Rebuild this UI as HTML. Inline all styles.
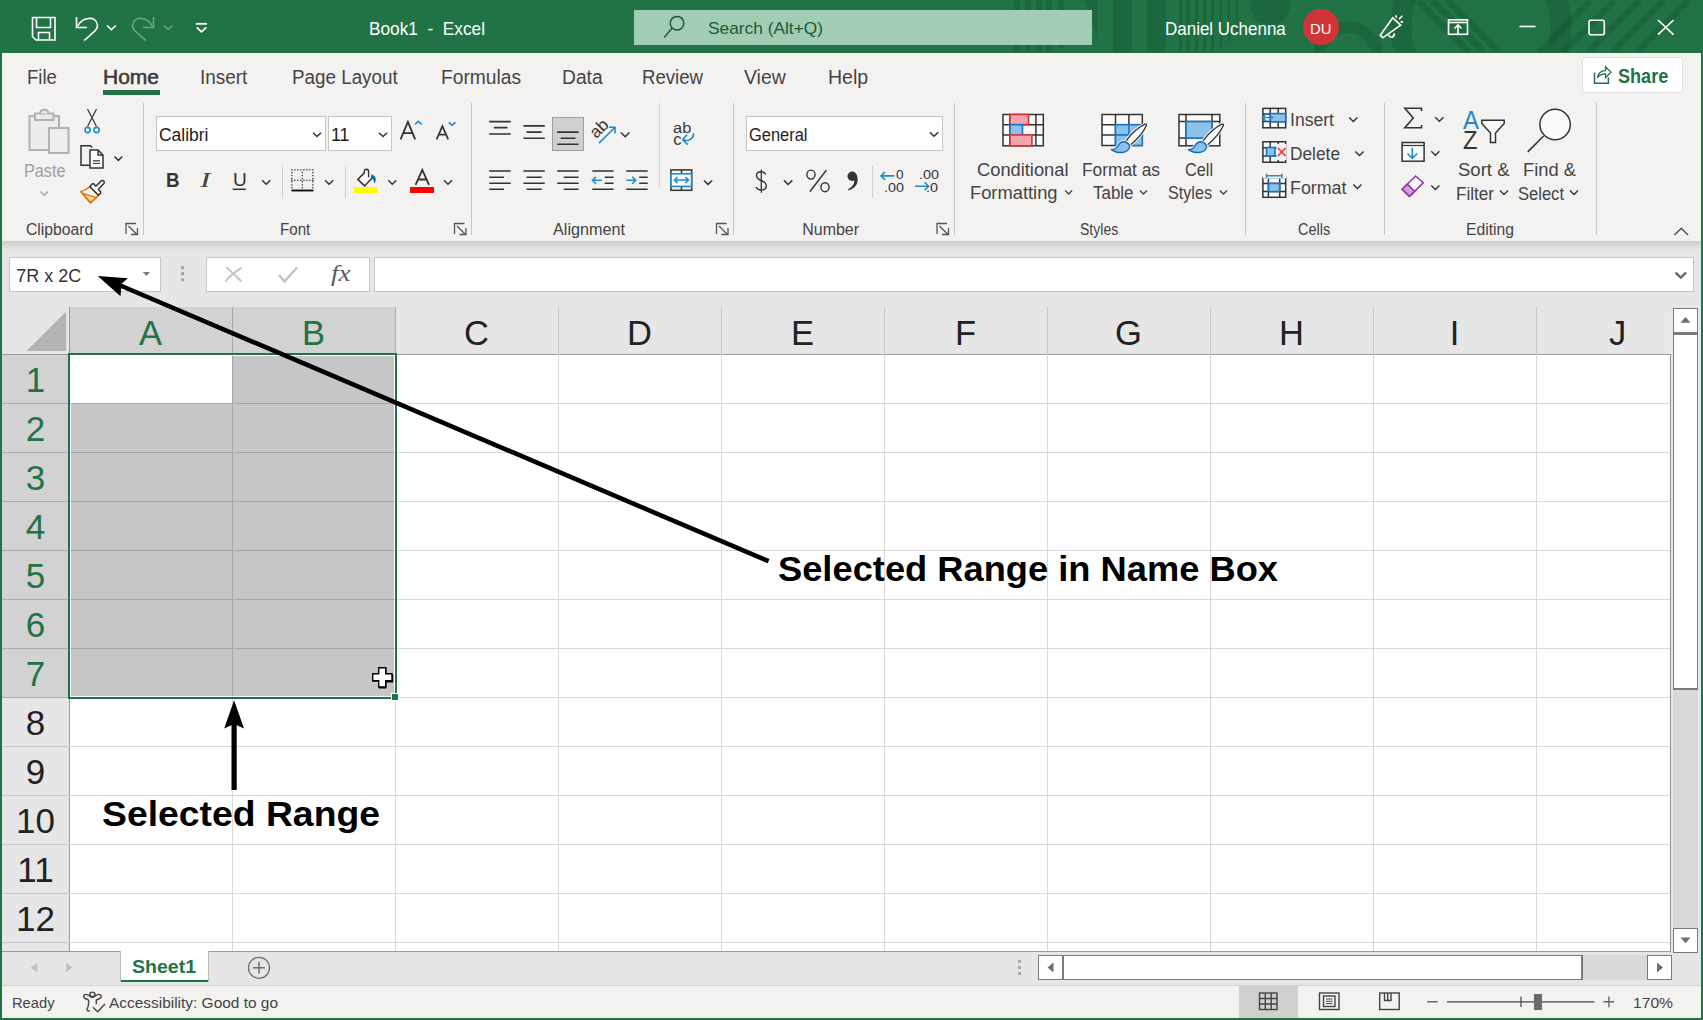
<!DOCTYPE html>
<html><head><meta charset="utf-8">
<style>
*{box-sizing:border-box;margin:0;padding:0}
html,body{width:1703px;height:1020px;overflow:hidden;background:#217346;font-family:"Liberation Sans",sans-serif;position:relative}
.a{position:absolute}
.t{position:absolute;white-space:nowrap;line-height:1;transform-origin:0 0}
svg{position:absolute;overflow:visible}
</style></head><body>
<div class="a" style="left:2px;top:53px;width:1699px;height:188px;background:#f3f2f1"></div>
<div class="a" style="left:2px;top:241px;width:1699px;height:66px;background:#e6e6e6"></div>
<div class="a" style="left:2px;top:241px;width:1699px;height:9px;background:linear-gradient(#cdcdcd,#e6e6e6)"></div>
<div class="a" style="left:2px;top:307px;width:1699px;height:645px;background:#e6e6e6"></div>
<div class="a" style="left:2px;top:952px;width:1699px;height:34px;background:#e6e6e6"></div>
<div class="a" style="left:2px;top:985px;width:1699px;height:1px;background:#d2d2d2"></div>
<div class="a" style="left:2px;top:986px;width:1699px;height:32px;background:#f3f2f1"></div>
<svg style="left:0;top:0" width="1703" height="52" viewBox="0 0 1703 52"><defs><clipPath id="tc"><rect x="0" y="0" width="1703" height="52"/></clipPath></defs>
<g clip-path="url(#tc)">
<g fill="#000" fill-opacity="0.10">
<rect x="1014" y="0" width="6" height="52"/><rect x="1025" y="0" width="6" height="52"/><rect x="1036" y="0" width="6" height="52"/><rect x="1046" y="0" width="6" height="52"/><rect x="1058" y="0" width="6" height="48"/>
<path d="M1084 0 H1097 V38 Z"/>
<rect x="1113" y="0" width="19" height="52"/>
<rect x="1147" y="0" width="19" height="52"/>
<rect x="1179" y="0" width="3" height="52"/><rect x="1186.5" y="0" width="3" height="52"/><rect x="1195" y="0" width="3" height="52"/><rect x="1203" y="0" width="3" height="52"/><rect x="1211" y="0" width="3" height="52"/><rect x="1219.5" y="0" width="3" height="49"/><rect x="1227.5" y="0" width="3" height="42"/><rect x="1235.6" y="0" width="3" height="35"/>
<circle cx="1270" cy="5" r="20"/>
</g>
<g fill="none" stroke="#000" stroke-opacity="0.10">
<circle cx="1348" cy="56" r="29" stroke-width="12"/>
<circle cx="1481" cy="26" r="80" stroke-width="21"/>
</g>
<g stroke="#000" stroke-opacity="0.10" stroke-width="7">
<path d="M1417 0 L1469 52 M1432 0 L1484 52 M1447 0 L1499 52"/>
<path d="M1591 0 L1539 52 M1615 0 L1563 52 M1640 0 L1588 52 M1664 0 L1612 52 M1689 0 L1637 52"/>
</g></g>
</svg>
<svg style="left:0;top:0" width="240" height="52" viewBox="0 0 240 52" fill="none" stroke="#fff" stroke-width="1.6">
<path d="M32.5 17.5 H55 V40 H36 L32.5 36.5 Z"/>
<path d="M36.5 17.5 V27.5 H50.5 V17.5"/>
<path d="M38.5 40 V32.5 H49.5 V40"/>
<path d="M76.5 17 V27.5 H87" />
<path d="M77.5 26.5 C82 17 96 15 97.5 25 C98 29 95 31 84 40.5"/>
<path d="M107 25.5 L111.4 29.7 L115.8 25.5"/>
<g stroke="#66a885">
<path d="M153.5 17 V27.5 H143" />
<path d="M152.5 26.5 C148 17 134 15 132.5 25 C132 29 135 31 146 40.5"/>
<path d="M164 25.5 L168.2 29.5 L172.4 25.5"/>
</g>
<path d="M195.8 23.8 H207" stroke-width="1.8"/>
<path d="M196.8 27.3 L201.5 31.8 L206.3 27.3" stroke-width="1.8"/>
</svg>
<div class="a" style="left:634px;top:10px;width:458px;height:35px;background:#a0cdb4"></div>
<svg style="left:655px;top:10px" width="40" height="35" viewBox="0 0 40 35" fill="none" stroke="#1d5a37" stroke-width="1.5">
<circle cx="22" cy="13.2" r="6.8"/><path d="M17.2 18 L9.2 27.5"/></svg>
<div class="a" style="left:1303px;top:9px;width:36px;height:36px;border-radius:50%;background:#d13438"></div>
<svg style="left:0;top:0" width="1703" height="52" viewBox="0 0 1703 52" fill="none" stroke="#fff" stroke-width="1.6">
<path d="M1380.3 35.3 L1392.8 17.8 L1400.6 25.2 L1382.8 37.8 Z" stroke-linejoin="miter"/>
<path d="M1388.6 34.8 Q1389.5 37.5 1391.8 37.2 Q1394.5 36.5 1394.3 33.2"/>
<path d="M1396.2 15.2 V17.8 M1399 19.2 L1402.4 15.7 M1400.6 21.9 H1403"/>
<rect x="1448.5" y="19.8" width="19" height="14.5"/>
<path d="M1448.5 22.5 H1467.5"/>
<path d="M1458 34 V25.5 M1454.5 28.5 L1458 25 L1461.5 28.5"/>
<path d="M1519.5 26.5 H1535.5"/>
<rect x="1589" y="20.2" width="15.3" height="14.5" rx="2"/>
<path d="M1658 20 L1673.5 34.7 M1673.5 20 L1658 34.7"/>
</svg>
<div class="a" style="left:103px;top:90px;width:57px;height:5px;background:#217346"></div>
<div class="a" style="left:1582px;top:57px;width:101px;height:36px;background:#fff;border:1px solid #e1dfdd;border-radius:3px"></div>
<svg style="left:0;top:0" width="1703" height="241" viewBox="0 0 1703 241" fill="none" stroke="#217346" stroke-width="1.5">
<path d="M1594.5 72.4 V83.3 H1608.4 V77.4" stroke-width="1.5"/>
<path d="M1597.4 77.8 Q1598.6 70.9 1605.5 70.7 V66.8 L1611 72.2 L1605.5 77.6 V73.9 Q1600.2 73.7 1597.4 77.8 Z" stroke-width="1.3" stroke-linejoin="miter"/>
</svg>
<div class="a" style="left:143px;top:103px;width:1px;height:132px;background:#c8c6c4"></div>
<div class="a" style="left:471px;top:103px;width:1px;height:132px;background:#c8c6c4"></div>
<div class="a" style="left:733px;top:103px;width:1px;height:132px;background:#c8c6c4"></div>
<div class="a" style="left:954px;top:103px;width:1px;height:132px;background:#c8c6c4"></div>
<div class="a" style="left:1245px;top:103px;width:1px;height:132px;background:#c8c6c4"></div>
<div class="a" style="left:1384px;top:103px;width:1px;height:132px;background:#c8c6c4"></div>
<div class="a" style="left:1596px;top:103px;width:1px;height:132px;background:#c8c6c4"></div>
<div class="a" style="left:282px;top:166px;width:1px;height:32px;background:#d2d0ce"></div>
<div class="a" style="left:345px;top:166px;width:1px;height:32px;background:#d2d0ce"></div>
<div class="a" style="left:659px;top:103px;width:1px;height:84px;background:#d2d0ce"></div>
<div class="a" style="left:872px;top:166px;width:1px;height:32px;background:#d2d0ce"></div>
<svg style="left:0;top:0" width="1703" height="241" viewBox="0 0 1703 241" fill="none" stroke="#555" stroke-width="1.3">
<path d="M126 234 V223.5 H136 M128.5 226 L137 234.5 M131 234.5 H137.5 V228"/>
<path d="M454.5 234 V223.5 H464.5 M457 226 L465.5 234.5 M459.5 234.5 H466 V228"/>
<path d="M716.5 234 V223.5 H726.5 M719 226 L727.5 234.5 M721.5 234.5 H728 V228"/>
<path d="M937 234 V223.5 H947 M939.5 226 L948 234.5 M942 234.5 H948.5 V228"/>
<path d="M1674.5 235 L1681.3 228.3 L1688 235" stroke-width="1.6"/>
</svg>
<svg style="left:0;top:0" width="1703" height="241" viewBox="0 0 1703 241" fill="none" stroke-width="1.5">
<g stroke="#b1b1b1" stroke-width="2">
<rect x="29.5" y="116" width="29.5" height="34" fill="#ececec"/>
<path d="M35 113.5 H53.5 V120 H35 Z" fill="#ececec"/>
<path d="M40 113.5 A4.3 4.3 0 0 1 48.5 113.5" fill="#ececec"/>
<rect x="49" y="128" width="19.5" height="25" fill="#eeeeee"/>
</g>
<path d="M40.5 191.5 L44.3 195.3 L48 191.5" stroke="#a6a6a6"/>
<g stroke="#333" stroke-width="1.2">
<path d="M87.5 109 L96.5 126.5 M96.5 109 L87.5 126.5"/>
</g>
<g stroke="#1e8bcd" stroke-width="1.6">
<circle cx="87.6" cy="130" r="2.6" fill="#fff"/><circle cx="96.6" cy="130" r="2.6" fill="#fff"/>
</g>
<g stroke="#333" stroke-width="1.5" stroke-linejoin="miter">
<path d="M89.5 165.2 H81 V145.8 H90.5 L92 147.5"/>
<path d="M90 150 H98 L103 155 V168 H90 Z" fill="#fafafa"/>
<path d="M98 150 V155 H103"/>
<path d="M93 160.8 H100 M93 163.5 H100" stroke-width="1.2"/>
<path d="M114.5 156.5 L118.4 160.4 L122.3 156.5"/>
</g>
<g stroke-linejoin="round">
<path d="M89.8 186.7 Q86.5 190 80.6 191.6 L90.4 203 L98.6 195.5 Z" fill="#fafafa" stroke="#e07010" stroke-width="1.5"/>
<path d="M82.5 193.3 L96.8 197.6 L90.4 202.3 Z" fill="#f7d98a" stroke="#e07010" stroke-width="1.3"/>
<path d="M89.8 186.5 L92.5 183.8 Q93.2 183.3 93.8 183.9 L95.8 186.2 L101.3 180.9 Q102.6 179.9 103.8 181.1 Q104.9 182.4 103.9 183.6 L98.4 189.3 L100.5 191.7 Q101.1 192.5 100.4 193.3 L98.4 195.3 Z" fill="#fafafa" stroke="#333" stroke-width="1.5"/>
</g>
</svg>
<div class="a" style="left:156px;top:116px;width:170px;height:35px;background:#fff;border:1px solid #c6c6c6"></div>
<div class="a" style="left:328px;top:116px;width:64px;height:35px;background:#fff;border:1px solid #c6c6c6"></div>
<svg style="left:0;top:0" width="1703" height="241" viewBox="0 0 1703 241" fill="none" stroke="#333" stroke-width="1.5">
<path d="M313.1 132.8 L317 136.5 L321 132.8"/>
<path d="M378.9 132.8 L383 136.5 L387.1 132.8"/>
<path d="M262.2 180.2 L266.2 184.2 L270.3 180.2"/>
<path d="M325.1 180.2 L329.1 184.2 L333.2 180.2"/>
<path d="M388.3 180.2 L392.3 184.2 L396.3 180.2"/>
<path d="M444 180.2 L448 184.2 L452 180.2"/>
<g stroke="#1e8bcd" stroke-width="1.6">
<path d="M415 124.4 L418.3 121.4 L421.7 124.4"/>
<path d="M448.8 122.3 L452.1 125.2 L455.5 122.3"/>
</g>
<path d="M232.7 189.3 H245.8" stroke-width="1.5"/>
<path d="M400.6 139.4 L407.9 121.8 L415.2 139.4 M403.2 133.2 H412.6" stroke-width="1.8"/>
<path d="M436.6 139.4 L442.4 126.2 L448.2 139.4 M438.7 134.6 H446.1" stroke-width="1.7"/>
<path d="M415.6 184.9 L422.3 170 L429 184.9 M417.9 179.5 H426.7" stroke-width="1.8"/>
<g fill="#333" stroke="none"><rect x="291.2" y="169.2" width="1.3" height="1.3"/><rect x="291.2" y="179.7" width="1.3" height="1.3"/><rect x="294.2" y="169.2" width="1.3" height="1.3"/><rect x="294.2" y="179.7" width="1.3" height="1.3"/><rect x="297.2" y="169.2" width="1.3" height="1.3"/><rect x="297.2" y="179.7" width="1.3" height="1.3"/><rect x="300.2" y="169.2" width="1.3" height="1.3"/><rect x="300.2" y="179.7" width="1.3" height="1.3"/><rect x="303.2" y="169.2" width="1.3" height="1.3"/><rect x="303.2" y="179.7" width="1.3" height="1.3"/><rect x="306.2" y="169.2" width="1.3" height="1.3"/><rect x="306.2" y="179.7" width="1.3" height="1.3"/><rect x="309.2" y="169.2" width="1.3" height="1.3"/><rect x="309.2" y="179.7" width="1.3" height="1.3"/><rect x="312.2" y="169.2" width="1.3" height="1.3"/><rect x="312.2" y="179.7" width="1.3" height="1.3"/><rect x="291.2" y="171.9" width="1.3" height="1.3"/><rect x="301.7" y="171.9" width="1.3" height="1.3"/><rect x="312.2" y="171.9" width="1.3" height="1.3"/><rect x="291.2" y="174.9" width="1.3" height="1.3"/><rect x="301.7" y="174.9" width="1.3" height="1.3"/><rect x="312.2" y="174.9" width="1.3" height="1.3"/><rect x="291.2" y="177.9" width="1.3" height="1.3"/><rect x="301.7" y="177.9" width="1.3" height="1.3"/><rect x="312.2" y="177.9" width="1.3" height="1.3"/><rect x="291.2" y="181.2" width="1.3" height="1.3"/><rect x="301.7" y="181.2" width="1.3" height="1.3"/><rect x="312.2" y="181.2" width="1.3" height="1.3"/><rect x="291.2" y="184.2" width="1.3" height="1.3"/><rect x="301.7" y="184.2" width="1.3" height="1.3"/><rect x="312.2" y="184.2" width="1.3" height="1.3"/><rect x="291.2" y="187.0" width="1.3" height="1.3"/><rect x="301.7" y="187.0" width="1.3" height="1.3"/><rect x="312.2" y="187.0" width="1.3" height="1.3"/></g>
<path d="M291.5 190.5 H313.5" stroke-width="1.9" stroke="#111"/>
<path d="M364.3 172.9 L357.8 179.4 L364.6 185.9 L372.4 177.8 L371.3 176.6" stroke-width="1.5" stroke-linejoin="miter" fill="#fafafa"/>
<path d="M364.3 172.9 V171.2 Q364.5 169.3 366.6 169.3 Q368.5 169.4 368.6 171.6 V177.3" stroke-width="1.4"/>
<path d="M371 174.6 Q375.7 175.3 375.8 179.6 Q375.6 182 374.6 183.8 Q374.1 180 371.6 177.4 Z" fill="#0f6cbd" stroke="none"/>
</svg>
<div class="a" style="left:354px;top:186.5px;width:24px;height:6px;background:#ffff00"></div>
<div class="a" style="left:410px;top:186.5px;width:24px;height:6px;background:#ff0000"></div>
<div class="a" style="left:552px;top:117px;width:32px;height:34px;background:#d2d0ce;border:1px solid #9d9d9d"></div>
<svg style="left:0;top:0" width="1703" height="241" viewBox="0 0 1703 241" fill="none" stroke="#333" stroke-width="1.6">
<path d="M489.2 121.6 H510.7 M493.8 127.6 H507.5 M489.2 134 H510.7"/>
<path d="M523.4 125.9 H544.8 M526.5 132.1 H541.7 M523.4 138.2 H544.8"/>
<path d="M557.2 132.1 H578.6 M560.6 138.2 H575.5 M557.2 144.2 H578.6"/>
<path d="M489.2 171 H510.7 M489.2 177.2 H504 M489.2 183.3 H510.7 M489.2 189.3 H504"/>
<path d="M523.4 171 H544.8 M526.5 177.2 H541.7 M523.4 183.3 H544.8 M526.5 189.3 H541.7"/>
<path d="M557.2 171 H578.6 M563.8 177.2 H578.6 M557.2 183.3 H578.6 M563.8 189.3 H578.6"/>
<path d="M592.3 171 H613.6 M604.7 177.2 H613.6 M604.7 183.3 H613.6 M592.3 189.3 H613.6"/>
<path d="M626.3 171 H647.7 M639.2 177.2 H647.7 M639.2 183.3 H647.7 M626.3 189.3 H647.7"/>
<path d="M620.9 132.5 L625.2 136.8 L629.4 132.5" stroke-width="1.5"/>
<path d="M704 180.5 L708 184.4 L712.2 180.5" stroke-width="1.5"/>
<g stroke="#1e8bcd" stroke-width="1.6">
<path d="M592.5 180.2 H601.9 M596 176.7 L592.5 180.2 L596 183.7"/>
<path d="M626.3 180.2 H635.7 M632.2 176.7 L635.7 180.2 L632.2 183.7"/>
<path d="M599 143.1 L615 127.2 M609 127.2 H615 V133.2"/>
<path d="M693.6 133.2 Q693.6 138.6 688.5 140.2 Q685.6 140.9 683.2 139.7 M686.9 134.7 L682.7 139.7 L687.7 144.6"/>
</g>
<rect x="670.9" y="169.9" width="20.8" height="20.4" stroke-width="1.5"/>
<path d="M681.5 170 V174 M681.5 186.5 V190" stroke-width="1.5"/>
<rect x="671" y="173.8" width="20.6" height="12.6" stroke="#1e8bcd" stroke-width="1.6" fill="#fafafa"/>
<path d="M674.5 180.1 H688.5 M677.5 177.1 L674.5 180.1 L677.5 183.1 M685.5 177.1 L688.5 180.1 L685.5 183.1" stroke="#1e8bcd" stroke-width="1.5"/>
</svg>
<div class="a" style="left:746px;top:116px;width:197px;height:35px;background:#fff;border:1px solid #c6c6c6"></div>
<svg style="left:0;top:0" width="1703" height="241" viewBox="0 0 1703 241" fill="none" stroke="#333" stroke-width="1.5">
<path d="M929.9 132.2 L934 136.3 L938.3 132.2"/>
<path d="M784 180.4 L788.1 184.5 L792.3 180.4"/>
<path d="M761.3 169.4 V192.7" stroke-width="1.3"/>
<path d="M765.8 174.3 C764.5 172.2 762.8 171.7 761 171.7 C758 171.7 756.5 173.5 756.5 175.6 C756.5 182 766.3 179.5 766.3 185.8 C766.3 188.3 764.5 190 761.3 190 C758.8 190 757 189 756 187" stroke-width="1.4"/>
<ellipse cx="811" cy="174.6" rx="4.1" ry="4.5" stroke-width="1.4"/>
<ellipse cx="825" cy="187.2" rx="4.1" ry="4.5" stroke-width="1.4"/>
<path d="M826.3 170.2 L809.8 191.7" stroke-width="1.4"/>
<circle cx="852.2" cy="176.3" r="4.7" fill="#333" stroke="none"/>
<path d="M856.6 174.8 C859.2 181 857.3 187.8 848.4 190.5 L848 189.2 C852.8 186.6 854.7 183.4 854.2 179.4 Z" fill="#333" stroke="none"/>
<g stroke="#1e8bcd" stroke-width="1.6">
<path d="M881 175.9 H894.4 M885 171.9 L881 175.9 L885 179.9"/>
<path d="M915 186.2 H928.6 M924.6 182.2 L928.6 186.2 L924.6 190.2"/>
</g>
</svg>
<svg style="left:0;top:0" width="1703" height="241" viewBox="0 0 1703 241" fill="none" stroke-width="1.5">
<g stroke="#333" fill="#fafafa">
<rect x="1003" y="114.5" width="40.3" height="31.3"/>
<path d="M1009.8 114.5 V145.8 M1035.9 114.5 V145.8 M1003 124.7 H1043.3 M1003 134.9 H1043.3" fill="none"/>
</g>
<rect x="1010" y="114.5" width="18.5" height="10.2" fill="#f6a4ab" stroke="#d13438" stroke-width="1.6"/>
<rect x="1010" y="124.7" width="12.5" height="10.2" fill="#8cc1ea" stroke="#1a75c4" stroke-width="1.6"/>
<rect x="1010" y="134.9" width="21.9" height="10.9" fill="#f6a4ab" stroke="#d13438" stroke-width="1.6"/>

<g stroke="#333" fill="#fafafa">
<rect x="1102" y="114.5" width="40.3" height="31"/>
<path d="M1115.5 114.5 V145.5 M1128.9 114.5 V145.5 M1102 124.7 H1142.3 M1102 134.9 H1142.3" fill="none"/>
</g>
<rect x="1115.5" y="124.7" width="26.8" height="20.8" fill="#8cc1ea" stroke="#1a75c4" stroke-width="1.6"/>
<path d="M1115.5 134.9 H1142.3 M1128.9 124.7 V145.5" stroke="#1a75c4" stroke-width="1.6"/>
<path d="M1125.3 141.8 C1131.0 134 1139.0 127 1145.0 124.2 Q1146.5 123.6 1146.5 125.2 C1144.0 131 1137.0 139.5 1129.6 145.8 Z" fill="none" stroke="#fafafa" stroke-width="3.2" stroke-linejoin="round"/>
<path d="M1125.3 141.8 C1131.0 134 1139.0 127 1145.0 124.2 Q1146.5 123.6 1146.5 125.2 C1144.0 131 1137.0 139.5 1129.6 145.8 Z" fill="#fafafa" stroke="#333" stroke-width="1.3" stroke-linejoin="round"/>
<path d="M1111.3 149.6 Q1116.5 149.6 1118.5 145 Q1121.0 140.8 1125.3 142 Q1129.5 143.5 1129.6 147 Q1129.0 151.5 1122.5 152.5 Q1115.5 153 1111.3 149.6 Z" fill="none" stroke="#fafafa" stroke-width="3" stroke-linejoin="round"/>
<path d="M1111.3 149.6 Q1116.5 149.6 1118.5 145 Q1121.0 140.8 1125.3 142 Q1129.5 143.5 1129.6 147 Q1129.0 151.5 1122.5 152.5 Q1115.5 153 1111.3 149.6 Z" fill="#8cc1ea" stroke="#0f6cbd" stroke-width="1.4" stroke-linejoin="round"/>

<g stroke="#333" fill="#fafafa">
<rect x="1179" y="114.5" width="40.8" height="31.3"/>
<path d="M1186 114.5 V145.8 M1212 114.5 V138 M1179 121.6 H1219.8 M1179 138.1 H1212" fill="none"/>
</g>
<rect x="1186" y="121.6" width="26" height="16.5" fill="#8cc1ea" stroke="#1a75c4" stroke-width="1.6"/>
<path d="M1202.3 141.8 C1208.0 134 1216.0 127 1222.0 124.2 Q1223.5 123.6 1223.5 125.2 C1221.0 131 1214.0 139.5 1206.6 145.8 Z" fill="none" stroke="#fafafa" stroke-width="3.2" stroke-linejoin="round"/>
<path d="M1202.3 141.8 C1208.0 134 1216.0 127 1222.0 124.2 Q1223.5 123.6 1223.5 125.2 C1221.0 131 1214.0 139.5 1206.6 145.8 Z" fill="#fafafa" stroke="#333" stroke-width="1.3" stroke-linejoin="round"/>
<path d="M1188.3 149.6 Q1193.5 149.6 1195.5 145 Q1198.0 140.8 1202.3 142 Q1206.5 143.5 1206.6 147 Q1206.0 151.5 1199.5 152.5 Q1192.5 153 1188.3 149.6 Z" fill="none" stroke="#fafafa" stroke-width="3" stroke-linejoin="round"/>
<path d="M1188.3 149.6 Q1193.5 149.6 1195.5 145 Q1198.0 140.8 1202.3 142 Q1206.5 143.5 1206.6 147 Q1206.0 151.5 1199.5 152.5 Q1192.5 153 1188.3 149.6 Z" fill="#8cc1ea" stroke="#0f6cbd" stroke-width="1.4" stroke-linejoin="round"/>
<g stroke="#444" stroke-width="1.4">
<path d="M1065.2 190.5 L1068.6 194 L1072 190.5"/>
<path d="M1140 190.5 L1143.4 194 L1146.8 190.5"/>
<path d="M1219.8 190.5 L1223.4 194 L1227 190.5"/>
</g>
</svg>
<svg style="left:0;top:0" width="1703" height="241" viewBox="0 0 1703 241" fill="none" stroke-width="1.5">
<g stroke="#333" fill="#fafafa">
<rect x="1262.9" y="108.4" width="22.8" height="19.4"/>
<path d="M1270.2 108.4 V127.8 M1278.2 108.4 V127.8 M1262.9 114 H1285.7 M1262.9 121.6 H1285.7" fill="none"/>
</g>
<rect x="1270.4" y="113.6" width="15.3" height="8.3" fill="#8cc1ea" stroke="#1a75c4" stroke-width="1.6"/>
<path d="M1262.5 117.5 H1273.5 M1266.5 113.5 L1262.5 117.5 L1266.5 121.5" stroke="#1e8bcd" stroke-width="1.7" fill="none"/>
<g stroke="#333" fill="#fafafa">
<path d="M1262.9 141.7 H1285.7 V162.3 H1262.9 Z"/>
<path d="M1270.2 141.7 V162.3 M1278.2 141.7 V162.3 M1262.9 147.8 H1285.7 M1262.9 156 H1285.7" fill="none"/>
</g>
<path d="M1276.5 144 H1286.5 V160 H1276.5 Z" fill="#f3f2f1" stroke="none"/>
<rect x="1266.5" y="147.5" width="8.5" height="8.5" fill="#8cc1ea" stroke="#1a75c4" stroke-width="1.6"/>
<path d="M1278 148 L1285.5 156 M1285.5 148 L1278 156" stroke="#e8383d" stroke-width="1.6"/>
<g stroke="#333" fill="#fafafa">
<rect x="1262.9" y="177.8" width="22.8" height="19.5"/>
<path d="M1268.4 177.8 V197.3 M1279.7 177.8 V197.3 M1262.9 183.4 H1285.7 M1262.9 191.6 H1285.7" fill="none"/>
</g>
<path d="M1263 176.5 H1286 V178.6 H1263 Z" fill="#f3f2f1" stroke="none"/>
<rect x="1268.6" y="183.4" width="11.1" height="8.2" fill="#8cc1ea" stroke="#1a75c4" stroke-width="1.6"/>
<path d="M1266.5 175.8 H1282 M1266.5 173.8 V177.8 M1282 173.8 V177.8" stroke="#1e8bcd" stroke-width="1.5"/>
<g stroke="#333" stroke-width="1.4">
<path d="M1349.2 117.5 L1353.3 121.6 L1357.4 117.5"/>
<path d="M1355.3 151.5 L1359.5 155.6 L1363.6 151.5"/>
<path d="M1353.3 184.4 L1357.4 188.5 L1361.5 184.4"/>
</g>
</svg>
<svg style="left:0;top:0" width="1703" height="241" viewBox="0 0 1703 241" fill="none" stroke-width="1.5">
<path d="M1421.5 111 V108.3 H1404.8 L1413.3 118.1 L1404.8 127.8 H1421.5 V125" stroke="#333" stroke-width="1.6" stroke-linejoin="miter"/>
<rect x="1402.1" y="142.5" width="22" height="18.7" fill="#fafafa" stroke="#333" stroke-width="1.5"/>
<path d="M1402.1 145.5 H1424.1" stroke="#333" stroke-width="1.2"/>
<path d="M1412.3 147.8 V158.3 M1407.5 153.5 L1412.3 158.3 L1417.1 153.5" stroke="#1e8bcd" stroke-width="1.6"/>
<path d="M1402.2 189.3 L1415.6 176 L1423.2 182.7 L1409.5 196.3 Z" fill="#fafafa" stroke="#8a3ba0" stroke-width="1.6" stroke-linejoin="miter"/>
<path d="M1402.2 189.3 L1407.3 184.2 L1414.5 191.3 L1409.5 196.3 Z" fill="#d69ee0" stroke="#8a3ba0" stroke-width="1.6"/>
<g stroke="#333" stroke-width="1.4">
<path d="M1435.2 117.3 L1439.4 121.3 L1443.5 117.3"/>
<path d="M1431.3 151.3 L1435.4 155.3 L1439.4 151.3"/>
<path d="M1431.3 185.4 L1435.4 189.4 L1439.4 185.4"/>
<path d="M1500 190.5 L1504 194.5 L1508 190.5"/>
<path d="M1570 190.5 L1574 194.5 L1578 190.5"/>
</g>
<path d="M1481.8 120.2 H1504.2 V123.5 L1495.5 133 V142.5 H1490.5 V133 L1481.8 123.5 Z" fill="#fafafa" stroke="#333" stroke-width="1.5" stroke-linejoin="miter"/>
<circle cx="1555.1" cy="124.5" r="15.2" fill="#fafafa" stroke="#333" stroke-width="1.5"/>
<path d="M1543.6 136 L1527.8 151.9" stroke="#333" stroke-width="1.5"/>
</svg>
<div class="a" style="left:9px;top:257px;width:152px;height:35px;background:#fff;border:1px solid #c6c6c6"></div>
<div class="a" style="left:206px;top:257px;width:164px;height:35px;background:#fff;border:1px solid #c6c6c6"></div>
<div class="a" style="left:374px;top:257px;width:1320px;height:35px;background:#fff;border:1px solid #c6c6c6"></div>
<svg style="left:0;top:0" width="1703" height="307" viewBox="0 0 1703 307" fill="none" stroke-width="1.5">
<path d="M142.8 272 H150 L146.4 276 Z" fill="#7a7a7a" stroke="none"/>
<g fill="#a3a3a3"><rect x="181" y="266.2" width="3" height="3"/><rect x="181" y="272.2" width="3" height="3"/><rect x="181" y="278.2" width="3" height="3"/></g>
<path d="M226.5 267.5 Q234 274 241.5 281.5 M241.5 267.8 Q232 273 225.5 281.5" stroke="#c4c4c4" stroke-width="2"/>
<path d="M279 275 L284.5 281.5 L297 267.5" stroke="#c4c4c4" stroke-width="2.6"/>
<path d="M1675.5 272.5 L1680.8 277.5 L1686 272.5" stroke="#666" stroke-width="2.4"/>
</svg>
<div class="a" style="left:70px;top:355px;width:1601px;height:596px;background:#fff"></div>
<div class="a" style="left:2px;top:307px;width:67px;height:47px;background:#e6e6e6"></div>
<svg style="left:0;top:0" width="80" height="360" viewBox="0 0 80 360"><path d="M66 311.5 V351 H26.5 Z" fill="#b4b4b4"/></svg>
<div class="a" style="left:69px;top:307px;width:326px;height:47px;background:#d2d2d2"></div>
<div class="a" style="left:69px;top:307px;width:1px;height:47px;background:#ababab"></div>
<div class="a" style="left:232px;top:307px;width:1px;height:47px;background:#ababab"></div>
<div class="a" style="left:395px;top:307px;width:1px;height:47px;background:#ababab"></div>
<div class="a" style="left:558px;top:307px;width:1px;height:47px;background:#c6c6c6"></div>
<div class="a" style="left:721px;top:307px;width:1px;height:47px;background:#c6c6c6"></div>
<div class="a" style="left:884px;top:307px;width:1px;height:47px;background:#c6c6c6"></div>
<div class="a" style="left:1047px;top:307px;width:1px;height:47px;background:#c6c6c6"></div>
<div class="a" style="left:1210px;top:307px;width:1px;height:47px;background:#c6c6c6"></div>
<div class="a" style="left:1373px;top:307px;width:1px;height:47px;background:#c6c6c6"></div>
<div class="a" style="left:1536px;top:307px;width:1px;height:47px;background:#c6c6c6"></div>
<div class="a" style="left:2px;top:354px;width:1669px;height:1px;background:#9b9b9b"></div>
<div class="a" style="left:2px;top:355px;width:67px;height:596px;background:#e6e6e6"></div>
<div class="a" style="left:2px;top:355px;width:67px;height:342px;background:#d2d2d2"></div>
<div class="a" style="left:69px;top:307px;width:1px;height:644px;background:#9b9b9b"></div>
<div class="a" style="left:2px;top:403px;width:66px;height:1px;background:#ababab"></div>
<div class="a" style="left:2px;top:452px;width:66px;height:1px;background:#ababab"></div>
<div class="a" style="left:2px;top:501px;width:66px;height:1px;background:#ababab"></div>
<div class="a" style="left:2px;top:550px;width:66px;height:1px;background:#ababab"></div>
<div class="a" style="left:2px;top:599px;width:66px;height:1px;background:#ababab"></div>
<div class="a" style="left:2px;top:648px;width:66px;height:1px;background:#ababab"></div>
<div class="a" style="left:2px;top:697px;width:66px;height:1px;background:#ababab"></div>
<div class="a" style="left:2px;top:746px;width:66px;height:1px;background:#c6c6c6"></div>
<div class="a" style="left:2px;top:795px;width:66px;height:1px;background:#c6c6c6"></div>
<div class="a" style="left:2px;top:844px;width:66px;height:1px;background:#c6c6c6"></div>
<div class="a" style="left:2px;top:893px;width:66px;height:1px;background:#c6c6c6"></div>
<div class="a" style="left:2px;top:942px;width:66px;height:1px;background:#c6c6c6"></div>
<div class="a" style="left:69px;top:403px;width:1601px;height:1px;background:#d9d9d9"></div>
<div class="a" style="left:69px;top:452px;width:1601px;height:1px;background:#d9d9d9"></div>
<div class="a" style="left:69px;top:501px;width:1601px;height:1px;background:#d9d9d9"></div>
<div class="a" style="left:69px;top:550px;width:1601px;height:1px;background:#d9d9d9"></div>
<div class="a" style="left:69px;top:599px;width:1601px;height:1px;background:#d9d9d9"></div>
<div class="a" style="left:69px;top:648px;width:1601px;height:1px;background:#d9d9d9"></div>
<div class="a" style="left:69px;top:697px;width:1601px;height:1px;background:#d9d9d9"></div>
<div class="a" style="left:69px;top:746px;width:1601px;height:1px;background:#d9d9d9"></div>
<div class="a" style="left:69px;top:795px;width:1601px;height:1px;background:#d9d9d9"></div>
<div class="a" style="left:69px;top:844px;width:1601px;height:1px;background:#d9d9d9"></div>
<div class="a" style="left:69px;top:893px;width:1601px;height:1px;background:#d9d9d9"></div>
<div class="a" style="left:69px;top:942px;width:1601px;height:1px;background:#d9d9d9"></div>
<div class="a" style="left:232px;top:354px;width:1px;height:597px;background:#d9d9d9"></div>
<div class="a" style="left:395px;top:354px;width:1px;height:597px;background:#d9d9d9"></div>
<div class="a" style="left:558px;top:354px;width:1px;height:597px;background:#d9d9d9"></div>
<div class="a" style="left:721px;top:354px;width:1px;height:597px;background:#d9d9d9"></div>
<div class="a" style="left:884px;top:354px;width:1px;height:597px;background:#d9d9d9"></div>
<div class="a" style="left:1047px;top:354px;width:1px;height:597px;background:#d9d9d9"></div>
<div class="a" style="left:1210px;top:354px;width:1px;height:597px;background:#d9d9d9"></div>
<div class="a" style="left:1373px;top:354px;width:1px;height:597px;background:#d9d9d9"></div>
<div class="a" style="left:1536px;top:354px;width:1px;height:597px;background:#d9d9d9"></div>
<div class="a" style="left:71px;top:356px;width:323px;height:340px;background:#c6c6c6"></div>
<div class="a" style="left:70px;top:355px;width:162px;height:48px;background:#fff"></div>
<div class="a" style="left:71px;top:403px;width:323px;height:1px;background:#a6a6a6"></div>
<div class="a" style="left:71px;top:452px;width:323px;height:1px;background:#a6a6a6"></div>
<div class="a" style="left:71px;top:501px;width:323px;height:1px;background:#a6a6a6"></div>
<div class="a" style="left:71px;top:550px;width:323px;height:1px;background:#a6a6a6"></div>
<div class="a" style="left:71px;top:599px;width:323px;height:1px;background:#a6a6a6"></div>
<div class="a" style="left:71px;top:648px;width:323px;height:1px;background:#a6a6a6"></div>
<div class="a" style="left:232px;top:356px;width:1px;height:340px;background:#a6a6a6"></div>
<div class="a" style="left:68px;top:353px;width:329px;height:346px;border:2px solid #217346"></div>
<div class="a" style="left:391px;top:693px;width:8px;height:8px;background:#217346;border:1px solid #fff"></div>
<div class="a" style="left:1670px;top:354px;width:1px;height:598px;background:#8f8f8f"></div>
<div class="a" style="left:2px;top:951px;width:1669px;height:1px;background:#9b9b9b"></div>
<div class="t" style="left:150.5px;top:315.9px;width:0;font-size:34.5px;color:#217346"><span style="position:absolute;left:0;transform:translateX(-50%)">A</span></div>
<div class="t" style="left:313.5px;top:315.9px;width:0;font-size:34.5px;color:#217346"><span style="position:absolute;left:0;transform:translateX(-50%)">B</span></div>
<div class="t" style="left:476.5px;top:315.9px;width:0;font-size:34.5px;color:#222"><span style="position:absolute;left:0;transform:translateX(-50%)">C</span></div>
<div class="t" style="left:639.5px;top:315.9px;width:0;font-size:34.5px;color:#222"><span style="position:absolute;left:0;transform:translateX(-50%)">D</span></div>
<div class="t" style="left:802.5px;top:315.9px;width:0;font-size:34.5px;color:#222"><span style="position:absolute;left:0;transform:translateX(-50%)">E</span></div>
<div class="t" style="left:965.5px;top:315.9px;width:0;font-size:34.5px;color:#222"><span style="position:absolute;left:0;transform:translateX(-50%)">F</span></div>
<div class="t" style="left:1128.5px;top:315.9px;width:0;font-size:34.5px;color:#222"><span style="position:absolute;left:0;transform:translateX(-50%)">G</span></div>
<div class="t" style="left:1291.5px;top:315.9px;width:0;font-size:34.5px;color:#222"><span style="position:absolute;left:0;transform:translateX(-50%)">H</span></div>
<div class="t" style="left:1454.5px;top:315.9px;width:0;font-size:34.5px;color:#222"><span style="position:absolute;left:0;transform:translateX(-50%)">I</span></div>
<div class="t" style="left:1617.5px;top:315.9px;width:0;font-size:34.5px;color:#222"><span style="position:absolute;left:0;transform:translateX(-50%)">J</span></div>
<div class="t" style="left:35.5px;top:362.4px;width:0;font-size:35px;color:#217346"><span style="position:absolute;left:0;transform:translateX(-50%)">1</span></div>
<div class="t" style="left:35.5px;top:411.4px;width:0;font-size:35px;color:#217346"><span style="position:absolute;left:0;transform:translateX(-50%)">2</span></div>
<div class="t" style="left:35.5px;top:460.4px;width:0;font-size:35px;color:#217346"><span style="position:absolute;left:0;transform:translateX(-50%)">3</span></div>
<div class="t" style="left:35.5px;top:509.4px;width:0;font-size:35px;color:#217346"><span style="position:absolute;left:0;transform:translateX(-50%)">4</span></div>
<div class="t" style="left:35.5px;top:558.4px;width:0;font-size:35px;color:#217346"><span style="position:absolute;left:0;transform:translateX(-50%)">5</span></div>
<div class="t" style="left:35.5px;top:607.4px;width:0;font-size:35px;color:#217346"><span style="position:absolute;left:0;transform:translateX(-50%)">6</span></div>
<div class="t" style="left:35.5px;top:656.4px;width:0;font-size:35px;color:#217346"><span style="position:absolute;left:0;transform:translateX(-50%)">7</span></div>
<div class="t" style="left:35.5px;top:705.4px;width:0;font-size:35px;color:#222"><span style="position:absolute;left:0;transform:translateX(-50%)">8</span></div>
<div class="t" style="left:35.5px;top:754.4px;width:0;font-size:35px;color:#222"><span style="position:absolute;left:0;transform:translateX(-50%)">9</span></div>
<div class="t" style="left:35.5px;top:803.4px;width:0;font-size:35px;color:#222"><span style="position:absolute;left:0;transform:translateX(-50%)">10</span></div>
<div class="t" style="left:35.5px;top:852.4px;width:0;font-size:35px;color:#222"><span style="position:absolute;left:0;transform:translateX(-50%)">11</span></div>
<div class="t" style="left:35.5px;top:901.4px;width:0;font-size:35px;color:#222"><span style="position:absolute;left:0;transform:translateX(-50%)">12</span></div>
<div class="a" style="left:1671px;top:307px;width:30px;height:645px;background:#e8e8e8"></div>
<div class="a" style="left:1673px;top:308px;width:25px;height:643px;background:#d9d9d9"></div>
<div class="a" style="left:1673px;top:308px;width:25px;height:25px;background:#fff;border:1px solid #7a7a7a"></div>
<div class="a" style="left:1673px;top:333px;width:25px;height:357px;background:#fff;border:1px solid #7a7a7a;border-width:2px 1px 2px 1px"></div>
<div class="a" style="left:1673px;top:928px;width:25px;height:25px;background:#fff;border:1px solid #7a7a7a"></div>
<svg style="left:0;top:0" width="1703" height="1020" viewBox="0 0 1703 1020"><path d="M1680.5 322.8 H1690.5 L1685.5 317 Z" fill="#6e6e6e"/><path d="M1680.5 937.5 H1690.5 L1685.5 943.3 Z" fill="#6e6e6e"/></svg>
<div class="a" style="left:120px;top:951px;width:89px;height:31px;background:#fff;border:1px solid #bdbdbd;border-top:none"></div>
<div class="a" style="left:121px;top:980px;width:87px;height:2px;background:#217346"></div>
<svg style="left:0;top:0" width="1703" height="1020" viewBox="0 0 1703 1020" fill="none">
<path d="M37.3 962.5 V972.6 L30.8 967.5 Z" fill="#c2c2c2"/>
<path d="M66 962.5 V972.6 L72.2 967.5 Z" fill="#c2c2c2"/>
<circle cx="259" cy="967.8" r="10.5" stroke="#707070" stroke-width="1.3"/>
<path d="M259 961.8 V973.8 M253 967.8 H265" stroke="#707070" stroke-width="1.5"/>
<g fill="#a6a6a6"><rect x="1018" y="960" width="3" height="3"/><rect x="1018" y="966" width="3" height="3"/><rect x="1018" y="972" width="3" height="3"/></g>
</svg>
<div class="a" style="left:1038px;top:955px;width:610px;height:25px;background:#d9d9d9"></div>
<div class="a" style="left:1038px;top:955px;width:25px;height:25px;background:#fff;border:1px solid #7a7a7a"></div>
<div class="a" style="left:1062px;top:955px;width:521px;height:25px;background:#fff;border:1px solid #7a7a7a;border-width:1px 2px 1px 2px"></div>
<div class="a" style="left:1647px;top:955px;width:25px;height:25px;background:#fff;border:1px solid #7a7a7a"></div>
<svg style="left:0;top:0" width="1703" height="1020" viewBox="0 0 1703 1020">
<path d="M1053.5 962.5 V972.5 L1047.5 967.5 Z" fill="#6e6e6e"/>
<path d="M1657 962.5 V972.5 L1663 967.5 Z" fill="#6e6e6e"/>
</svg>
<svg style="left:0;top:0" width="1703" height="1020" viewBox="0 0 1703 1020" fill="none" stroke="#444" stroke-width="1.3">
<circle cx="92.4" cy="994.7" r="2.6" stroke-width="1.4"/>
<path d="M88.6 1000 L85 998.5 Q82.8 997.2 84 995.3 Q85.4 993.6 88 995 Q92.4 997.8 96.8 995 Q99.3 993.6 100.8 995.3 Q102 997.2 99.8 998.5 L96.3 1000 V1004.2 M88.6 1000 V1004 Q88.2 1007 86.9 1009.5 Q87.3 1011.8 90 1010.6" stroke-width="1.4" stroke-linejoin="round"/>
<path d="M93 1007.2 L97.6 1011.7 L105 1004" stroke-width="1.4"/>
</svg>
<div class="a" style="left:1239px;top:986px;width:59px;height:32px;background:#d2d0ce"></div>
<svg style="left:0;top:0" width="1703" height="1020" viewBox="0 0 1703 1020" fill="none" stroke="#444" stroke-width="1.4">
<rect x="1259.5" y="993" width="17.5" height="16.5"/>
<path d="M1265.3 993 V1009.5 M1271.2 993 V1009.5 M1259.5 998.5 H1277 M1259.5 1004 H1277"/>
<rect x="1319.5" y="993" width="19.5" height="16.5"/>
<rect x="1323.5" y="996" width="11.5" height="10.5"/>
<path d="M1326 999 H1332.5 M1326 1001.3 H1332.5 M1326 1003.6 H1332.5" stroke-width="1"/>
<rect x="1379.7" y="993" width="19.5" height="16.5"/>
<path d="M1384.5 993 V1000.5 H1391 V993 M1387.7 993 V1000.5"/>
<path d="M1427.2 1001.8 H1437.6 M1603.5 1001.8 H1614.2 M1608.9 996.5 V1007.2" stroke="#666"/>
<path d="M1447 1001.8 H1594.4" stroke="#444" stroke-width="1.2"/>
<path d="M1521 996.5 V1007" stroke="#444" stroke-width="1.2"/>
</svg>
<div class="a" style="left:1533.7px;top:993.5px;width:8px;height:16.5px;background:#6b6b6b"></div>
<svg style="left:0;top:0" width="1703" height="1020" viewBox="0 0 1703 1020">
<path d="M768.6 561.2 L118 284.5" stroke="#000" stroke-width="4.6" fill="none"/>
<path d="M97.75 276 L128 278.3 L121.5 283.8 L120.5 296.2 Z" fill="#000"/>
<path d="M234.1 790 V724" stroke="#000" stroke-width="5.2" fill="none"/>
<path d="M234.1 700.2 L244 728.6 L234.1 724 L224.2 728.6 Z" fill="#000"/>
<g transform="translate(382.2,677.2)">
<path d="M-3.3 -9.5 H4.3 V-2.5 H11 V5.3 H4.3 V11.2 H-3.3 V4.3 H-9.8 V-3.3 H-3.3 Z" fill="#000"/>
<path d="M-3.5 -9.5 H3.5 V-3.5 H9.8 V3.5 H3.5 V9.8 H-3.5 V3.5 H-9.5 V-3.5 H-3.5 Z" fill="#fff" stroke="#000" stroke-width="1.4"/>
</g>
</svg>
<div class="t" id="t0" style="left:369.0px;top:19.42px;font-size:19.0px;color:#fff;font-weight:normal;transform:scaleX(0.9078);">Book1&nbsp; -&nbsp; Excel</div>
<div class="t" id="t1" style="left:708.0px;top:20.01px;font-size:17.0px;color:#1d5a37;font-weight:normal;transform:scaleX(1.0185);">Search (Alt+Q)</div>
<div class="t" id="t2" style="left:1165.0px;top:19.96px;font-size:18.0px;color:#fff;font-weight:normal;transform:scaleX(0.9431);">Daniel Uchenna</div>
<div class="t" id="t3" style="left:1310.2px;top:21.00px;font-size:15.0px;color:#fff;font-weight:normal;transform:scaleX(0.9921);">DU</div>
<div class="t" id="t4" style="left:27.0px;top:67.07px;font-size:20.0px;color:#444;font-weight:normal;transform:scaleX(0.9245);">File</div>
<div class="t" id="t5" style="left:200.0px;top:67.07px;font-size:20.0px;color:#444;font-weight:normal;transform:scaleX(0.9474);">Insert</div>
<div class="t" id="t6" style="left:291.5px;top:67.07px;font-size:20.0px;color:#444;font-weight:normal;transform:scaleX(0.9410);">Page Layout</div>
<div class="t" id="t7" style="left:440.7px;top:67.07px;font-size:20.0px;color:#444;font-weight:normal;transform:scaleX(0.9609);">Formulas</div>
<div class="t" id="t8" style="left:561.8px;top:67.07px;font-size:20.0px;color:#444;font-weight:normal;transform:scaleX(0.9609);">Data</div>
<div class="t" id="t9" style="left:642.3px;top:67.07px;font-size:20.0px;color:#444;font-weight:normal;transform:scaleX(0.9302);">Review</div>
<div class="t" id="t10" style="left:744.0px;top:67.07px;font-size:20.0px;color:#444;font-weight:normal;transform:scaleX(0.9721);">View</div>
<div class="t" id="t11" style="left:827.6px;top:67.07px;font-size:20.0px;color:#444;font-weight:normal;transform:scaleX(0.9771);">Help</div>
<div class="t" id="t12" style="left:102.5px;top:67.07px;font-size:20.0px;color:#3b3b3b;font-weight:normal;transform:scaleX(1.0495);-webkit-text-stroke:0.55px #3b3b3b;">Home</div>
<div class="t" id="t13" style="left:1618.3px;top:66.27px;font-size:20.0px;color:#217346;font-weight:bold;transform:scaleX(0.9048);">Share</div>
<div class="t" id="t14" style="left:25.7px;top:222.06px;font-size:16.0px;color:#444;font-weight:normal;transform:scaleX(0.9827);">Clipboard</div>
<div class="t" id="t15" style="left:280.1px;top:222.06px;font-size:16.0px;color:#444;font-weight:normal;transform:scaleX(0.9464);">Font</div>
<div class="t" id="t16" style="left:553.2px;top:222.06px;font-size:16.0px;color:#444;font-weight:normal;transform:scaleX(1.0119);">Alignment</div>
<div class="t" id="t17" style="left:802.2px;top:222.06px;font-size:16.0px;color:#444;font-weight:normal;">Number</div>
<div class="t" id="t18" style="left:1080.0px;top:222.06px;font-size:16.0px;color:#444;font-weight:normal;transform:scaleX(0.8766);">Styles</div>
<div class="t" id="t19" style="left:1297.5px;top:222.06px;font-size:16.0px;color:#444;font-weight:normal;transform:scaleX(0.9054);">Cells</div>
<div class="t" id="t20" style="left:1465.5px;top:222.06px;font-size:16.0px;color:#444;font-weight:normal;transform:scaleX(0.9812);">Editing</div>
<div class="t" id="t21" style="left:24.4px;top:162.89px;font-size:17.5px;color:#a19f9d;font-weight:normal;transform:scaleX(0.9274);">Paste</div>
<div class="t" id="t22" style="left:158.6px;top:126.79px;font-size:17.5px;color:#222;font-weight:normal;transform:scaleX(0.9978);">Calibri</div>
<div class="t" id="t23" style="left:330.8px;top:126.79px;font-size:17.5px;color:#222;font-weight:normal;transform:scaleX(1.0181);">11</div>
<div class="t" id="t24" style="left:165.7px;top:171.09px;font-size:19.5px;color:#333;font-weight:bold;transform:scaleX(0.9579);">B</div>
<div class="t" id="t25" style="left:200.0px;top:170.25px;font-size:20.5px;color:#444;font-weight:normal;font-family:'Liberation Serif',serif;font-style:italic;transform:scaleX(1.5378);">I</div>
<div class="t" id="t26" style="left:232.5px;top:171.69px;font-size:17.5px;color:#333;font-weight:normal;transform:scaleX(1.0917);">U</div>
<div class="t" id="t27" style="left:592.8px;top:119.01px;font-size:17.0px;color:#333;font-weight:normal;transform:rotate(-45deg);transform-origin:9px 13px;">ab</div>
<div class="t" id="t28" style="left:673.4px;top:120.08px;font-size:15.5px;color:#3a3a3a;font-weight:normal;transform:scaleX(1.0609);">ab</div>
<div class="t" id="t29" style="left:673.3px;top:130.53px;font-size:16.5px;color:#3a3a3a;font-weight:normal;">c</div>
<div class="t" id="t30" style="left:748.9px;top:127.09px;font-size:17.5px;color:#222;font-weight:normal;transform:scaleX(0.9395);">General</div>
<div class="t" id="t31" style="left:896.3px;top:168.82px;font-size:12.5px;color:#333;font-weight:normal;transform:scaleX(1.0787);">0</div>
<div class="t" id="t32" style="left:884.2px;top:181.72px;font-size:12.5px;color:#333;font-weight:normal;transform:scaleX(1.1500);">.00</div>
<div class="t" id="t33" style="left:918.6px;top:168.82px;font-size:12.5px;color:#333;font-weight:normal;transform:scaleX(1.1500);">.00</div>
<div class="t" id="t34" style="left:926.2px;top:181.72px;font-size:12.5px;color:#333;font-weight:normal;transform:scaleX(1.1497);">.0</div>
<div class="t" id="t35" style="left:976.5px;top:162.09px;font-size:17.5px;color:#444;font-weight:normal;transform:scaleX(1.0450);">Conditional</div>
<div class="t" id="t36" style="left:969.9px;top:185.39px;font-size:17.5px;color:#444;font-weight:normal;transform:scaleX(1.0461);">Formatting</div>
<div class="t" id="t37" style="left:1082.2px;top:162.09px;font-size:17.5px;color:#444;font-weight:normal;transform:scaleX(0.9901);">Format as</div>
<div class="t" id="t38" style="left:1092.7px;top:185.39px;font-size:17.5px;color:#444;font-weight:normal;transform:scaleX(0.9679);">Table</div>
<div class="t" id="t39" style="left:1184.5px;top:162.09px;font-size:17.5px;color:#444;font-weight:normal;transform:scaleX(0.9285);">Cell</div>
<div class="t" id="t40" style="left:1167.7px;top:185.39px;font-size:17.5px;color:#444;font-weight:normal;transform:scaleX(0.9233);">Styles</div>
<div class="t" id="t41" style="left:1290.3px;top:111.79px;font-size:17.5px;color:#444;font-weight:normal;transform:scaleX(1.0050);">Insert</div>
<div class="t" id="t42" style="left:1290.3px;top:145.79px;font-size:17.5px;color:#444;font-weight:normal;transform:scaleX(0.9883);">Delete</div>
<div class="t" id="t43" style="left:1290.3px;top:179.69px;font-size:17.5px;color:#444;font-weight:normal;transform:scaleX(1.0192);">Format</div>
<div class="t" id="t44" style="left:1462.5px;top:107.64px;font-size:25.0px;color:#1e8bcd;font-weight:normal;transform:scaleX(0.9588);">A</div>
<div class="t" id="t45" style="left:1462.7px;top:128.44px;font-size:25.0px;color:#333;font-weight:normal;transform:scaleX(0.9489);">Z</div>
<div class="t" id="t46" style="left:1457.8px;top:161.99px;font-size:17.5px;color:#444;font-weight:normal;transform:scaleX(1.0588);">Sort &amp;</div>
<div class="t" id="t47" style="left:1456.1px;top:185.69px;font-size:17.5px;color:#444;font-weight:normal;transform:scaleX(0.9771);">Filter</div>
<div class="t" id="t48" style="left:1522.7px;top:161.99px;font-size:17.5px;color:#444;font-weight:normal;transform:scaleX(1.0479);">Find &amp;</div>
<div class="t" id="t49" style="left:1518.0px;top:185.69px;font-size:17.5px;color:#444;font-weight:normal;transform:scaleX(0.9457);">Select</div>
<div class="t" id="t50" style="left:16.2px;top:267.06px;font-size:18.0px;color:#333;font-weight:normal;">7R x 2C</div>
<div class="t" id="t51" style="left:331.0px;top:262.03px;font-size:23.0px;color:#5a5a5a;font-weight:normal;font-family:'Liberation Serif',serif;font-style:italic;transform:scaleX(1.1740);">fx</div>
<div class="t" id="t52" style="left:131.5px;top:958.26px;font-size:18.0px;color:#217346;font-weight:bold;transform:scaleX(1.0842);">Sheet1</div>
<div class="t" id="t53" style="left:11.9px;top:995.20px;font-size:15.0px;color:#444;font-weight:normal;transform:scaleX(0.9802);">Ready</div>
<div class="t" id="t54" style="left:109.2px;top:995.20px;font-size:15.0px;color:#444;font-weight:normal;transform:scaleX(1.0289);">Accessibility: Good to go</div>
<div class="t" id="t55" style="left:1632.8px;top:995.08px;font-size:15.5px;color:#444;font-weight:normal;transform:scaleX(1.0087);">170%</div>
<div class="t" id="t56" style="left:777.9px;top:551.07px;font-size:35.0px;color:#000;font-weight:bold;transform:scaleX(1.0365);">Selected Range in Name Box</div>
<div class="t" id="t57" style="left:101.7px;top:796.47px;font-size:35.0px;color:#000;font-weight:bold;transform:scaleX(1.0665);">Selected Range</div>
</body></html>
